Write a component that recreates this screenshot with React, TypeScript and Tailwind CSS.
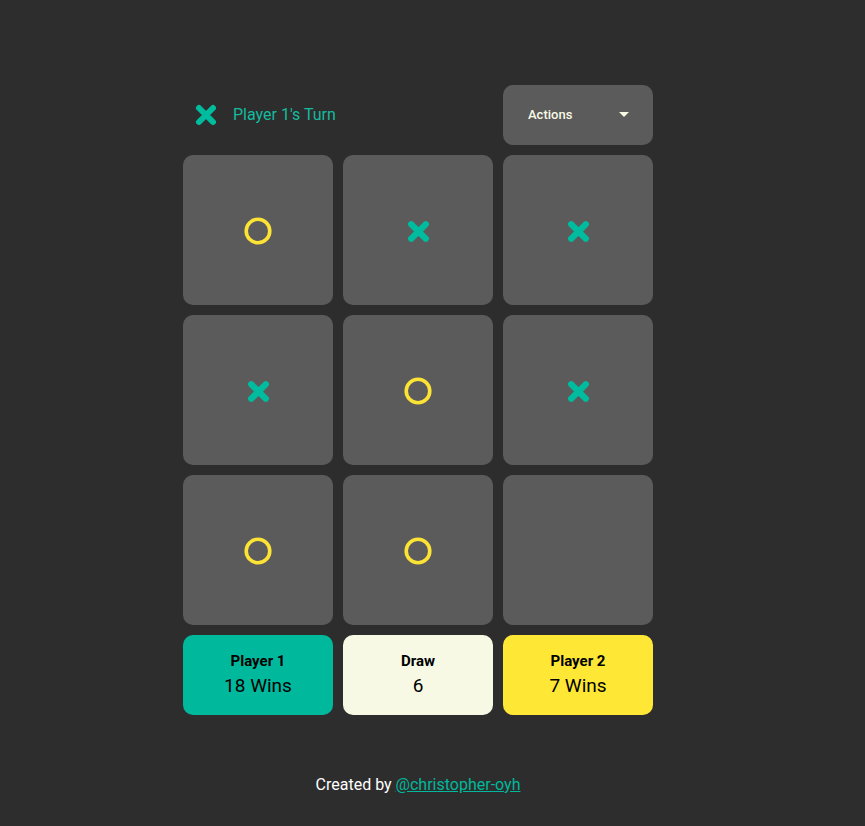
import React from "react";

type Mark = "x" | "o" | null;

const board: Mark[] = ["o", "x", "x", "x", "o", "x", "o", "o", null];

function XIcon({ size = 22 }: { size?: number }) {
  return (
    <svg width={size} height={size} viewBox="0 0 24 24" fill="none">
      <path d="M5 5 L19 19 M19 5 L5 19" stroke="#00bc9e" strokeWidth="6" strokeLinecap="round" />
    </svg>
  );
}

function OIcon() {
  return (
    <svg width="28" height="28" viewBox="0 0 28 28" fill="none">
      <circle cx="14" cy="14" r="11.8" stroke="#fde335" strokeWidth="3.6" />
    </svg>
  );
}

export default function App() {
  return (
    <div
      className="min-h-screen w-full bg-[#2d2d2d] flex justify-center pr-[29px]"
      style={{ fontFamily: "Roboto, 'Liberation Sans', sans-serif" }}
    >
      <div className="w-[470px] flex flex-col pt-[85px]">
        {/* top bar */}
        <div className="flex items-center justify-between h-[60px] mb-[10px]">
          <div className="flex items-center pl-[11px] gap-[15px]">
            <XIcon size={24} />
            <span className="text-[#14bb9f] text-[16px]">Player 1's Turn</span>
          </div>
          <button className="w-[150px] h-[60px] rounded-[10px] bg-[#5b5b5b] flex items-center justify-between pl-[25px] pr-[24px] text-[#f7f9e4] text-[13px] font-medium">
            Actions
            <svg width="10" height="6" viewBox="0 0 10 6">
              <path d="M0 0 L10 0 L5 5 Z" fill="#f7f9e4" />
            </svg>
          </button>
        </div>

        {/* board */}
        <div className="grid grid-cols-3 gap-[10px]">
          {board.map((m, i) => (
            <div key={i} className="h-[150px] rounded-[10px] bg-[#5b5b5b] flex items-center justify-center pt-[2px]">
              {m === "x" && <XIcon size={25} />}
              {m === "o" && <OIcon />}
            </div>
          ))}
        </div>

        {/* scores */}
        <div className="grid grid-cols-3 gap-[10px] mt-[10px]">
          <div className="h-[80px] rounded-[10px] bg-[#00b89c] flex flex-col items-center justify-center text-black">
            <p className="text-[15px] font-bold leading-[18px]">Player 1</p>
            <p className="text-[19px] leading-[26px] mt-[3px]">18 Wins</p>
          </div>
          <div className="h-[80px] rounded-[10px] bg-[#f7f9e4] flex flex-col items-center justify-center text-black">
            <p className="text-[15px] font-bold leading-[18px]">Draw</p>
            <p className="text-[19px] leading-[26px] mt-[3px]">6</p>
          </div>
          <div className="h-[80px] rounded-[10px] bg-[#fee735] flex flex-col items-center justify-center text-black">
            <p className="text-[15px] font-bold leading-[18px]">Player 2</p>
            <p className="text-[19px] leading-[26px] mt-[3px]">7 Wins</p>
          </div>
        </div>

        {/* footer */}
        <p className="mt-[59px] text-center text-white text-[16px] leading-[22px]">
          Created by{" "}
          <a href="#" className="text-[#00b89c] underline">
            @christopher-oyh
          </a>
        </p>
      </div>
    </div>
  );
}
